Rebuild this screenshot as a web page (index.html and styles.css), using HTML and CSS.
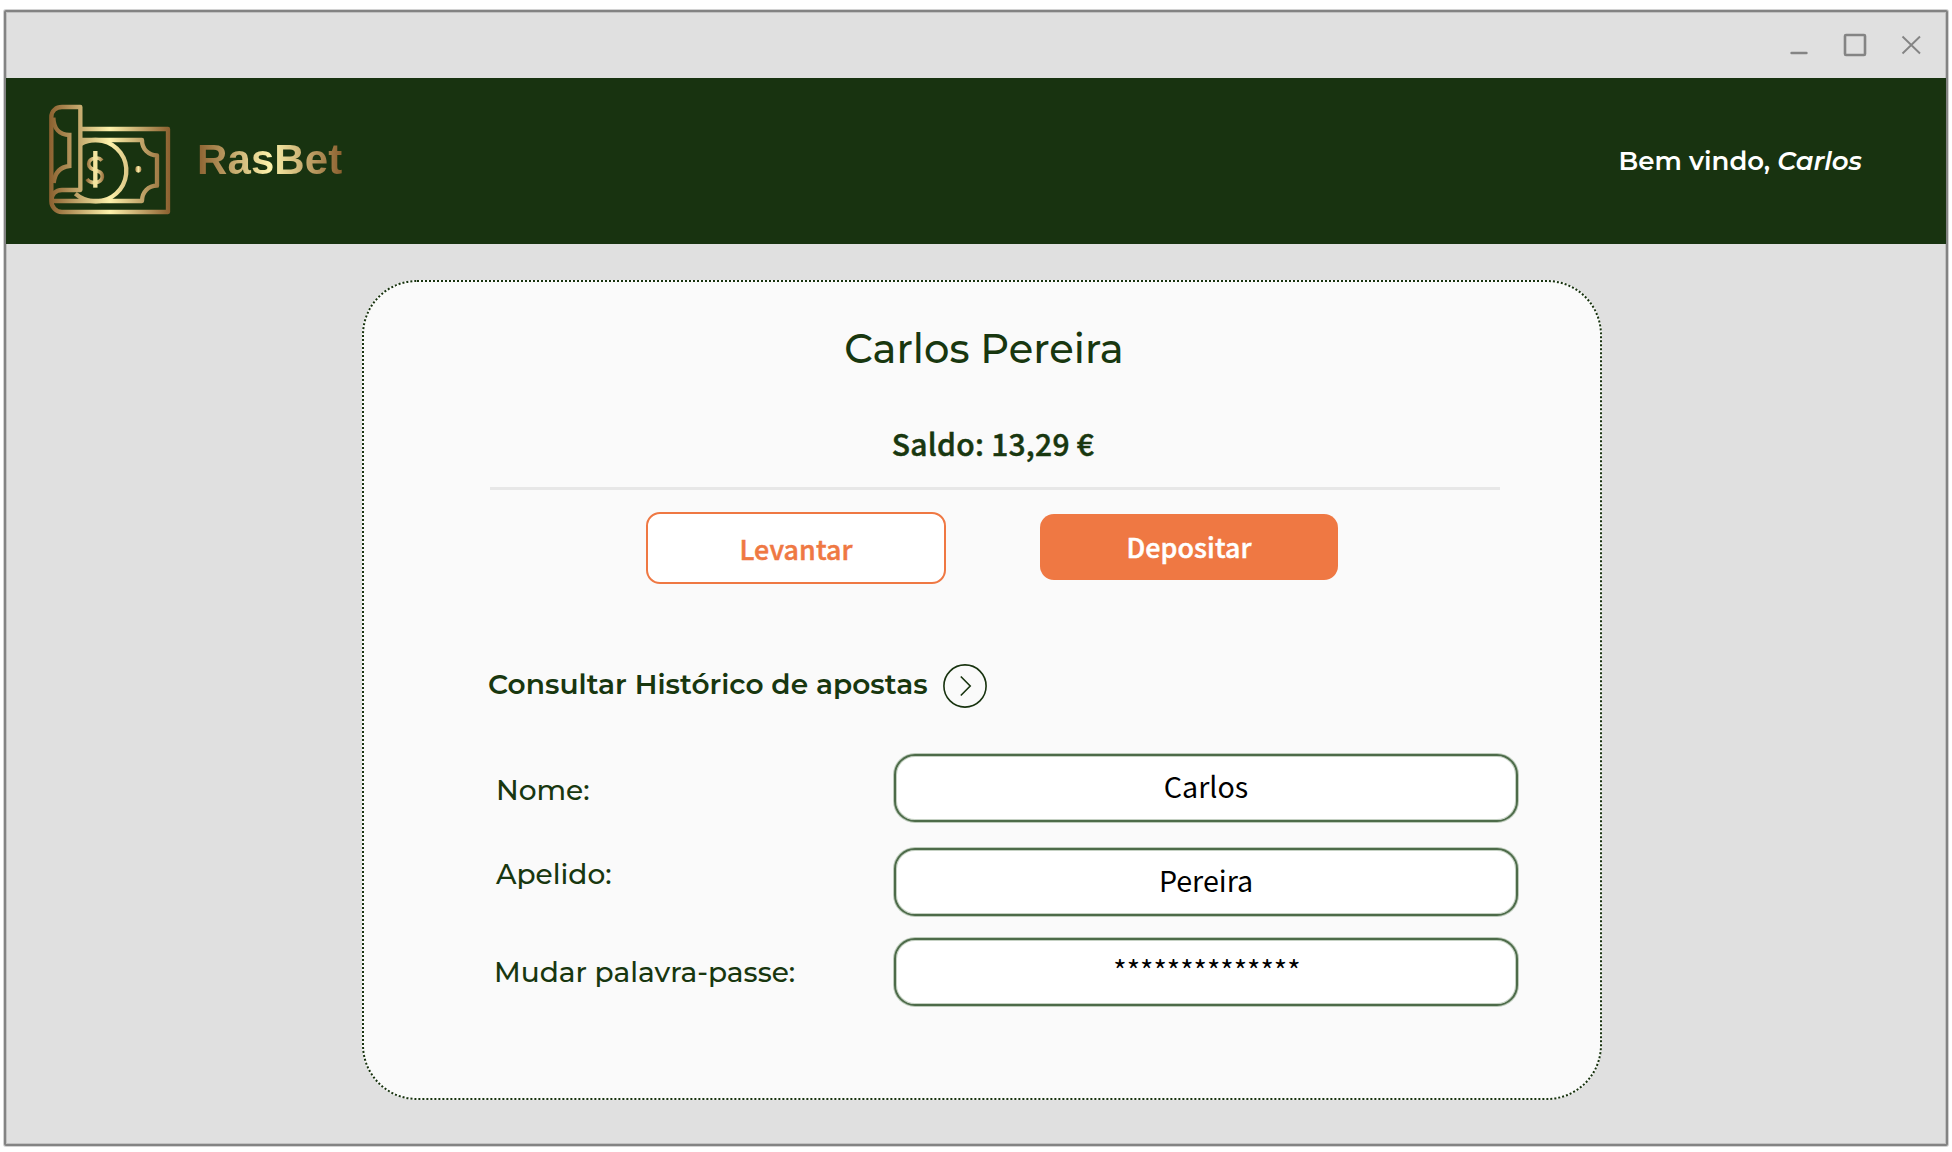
FILE: index.html
```html
<!DOCTYPE html>
<html lang="pt">
<head>
<meta charset="utf-8">
<title>RasBet</title>
<link rel="stylesheet" href="styles.css">
</head>
<body>
<div class="window">
  <div class="titlebar">
    <svg class="controls" width="132" height="26" viewBox="0 0 132 26" fill="none" stroke="#848484">
      <path d="M2.5 21H17.5" stroke-width="2.4" stroke-linecap="round"/>
      <rect x="56" y="3" width="20" height="20" rx="1" stroke-width="2.6"/>
      <path d="M113.5 4.5L131 21.5M131 4.5L113.5 21.5" stroke-width="1.9"/>
    </svg>
  </div>
  <header class="header">
    <div class="brand">
      <svg class="logo" width="140" height="130" viewBox="0 0 420 390" fill="none" stroke="url(#gold)" stroke-width="13">
        <defs>
          <linearGradient id="gold" gradientUnits="userSpaceOnUse" x1="28" y1="0" x2="390" y2="0">
            <stop offset="0" stop-color="#8b602f"/><stop offset=".5" stop-color="#fdf2ab"/><stop offset="1" stop-color="#8b602f"/>
          </linearGradient>
          <linearGradient id="gold-sign" gradientUnits="userSpaceOnUse" x1="138" y1="0" x2="194" y2="0">
            <stop offset="0" stop-color="#8b602f"/><stop offset=".5" stop-color="#fdf2ab"/><stop offset="1" stop-color="#8b602f"/>
          </linearGradient>
          <linearGradient id="gold-dot"><stop offset="0" stop-color="#a98148"/><stop offset=".5" stop-color="#fdf2ab"/><stop offset="1" stop-color="#a98148"/></linearGradient>
        </defs>
        <path d="M121 102H384V351H66C48 351 34 336 34 318V66C34 48 48 36 66 36H121V285H66C46 285 34 299 34 318H306C306 291 325 272 351 272V181C325 181 306 162 306 135H121" stroke-linejoin="round"/>
        <path d="M40 68C41 100 58 120 88 120V213C58 216 44 236 41 264"/>
        <path d="M122 147A92 92 0 1 1 106 296"/>
        <path d="M186 197C177 184 147 187 146 207C146 232 188 219 187 246C184 267 150 267 141 252" stroke="url(#gold-sign)" stroke-width="11"/>
        <path d="M166 168V278" stroke="#f3e59f"/>
        <ellipse cx="295" cy="223" rx="9" ry="10" fill="url(#gold-dot)" stroke="none"/>
      </svg>
      <span class="brand-name">RasBet</span>
    </div>
    <p class="welcome">Bem vindo, <em>Carlos</em></p>
  </header>
  <main class="card">
    <svg class="card-outline" width="1240" height="820"><rect x="1" y="1" width="1238" height="818" rx="54"/></svg>
    <h1 class="name">Carlos Pereira</h1>
    <p class="balance">Saldo: 13,29 €</p>
    <hr class="divider">
    <div class="actions">
      <button class="button outline"><span>Levantar</span></button>
      <button class="button solid"><span>Depositar</span></button>
    </div>
    <a class="history"><span class="history-text">Consultar Histórico de apostas</span>
      <svg width="44" height="44" viewBox="0 0 44 44" fill="none" stroke="#18330f" stroke-width="1.6"><circle cx="22" cy="22" r="21.1"/><path d="M17.8 12.5L27.2 22L17.8 31.5"/></svg>
    </a>
    <form class="fields">
      <div class="field"><label class="label nome">Nome:</label><div class="input">Carlos</div></div>
      <div class="field"><label class="label apelido">Apelido:</label><div class="input">Pereira</div></div>
      <div class="field"><label class="label senha">Mudar palavra-passe:</label><div class="input stars">**************</div></div>
    </form>
  </main>
</div>
</body>
</html>
```
FILE: styles.css
```css
* { box-sizing: border-box; }
body { margin: 0; padding: 10px 4px 6px; height: 1152px; background: #fff; overflow: hidden; color: #18370f; font-family: Montserrat, Inter, sans-serif; }
p, h1 { margin: 0; white-space: nowrap; }
.window { width: 1944px; height: 1136px; border: 2px solid #838383; border-radius: 2px; background: #e0e0e0; box-shadow: 0 0 0 1px #d2d2d2, inset 0 0 0 1px #c2c2c2; }
.titlebar { height: 66px; display: flex; justify-content: flex-end; padding: 20px 25px 0 0; }
.header { height: 166px; background: #183310; display: flex; justify-content: space-between; padding: 0 84px 0 34px; color: #fff; }
.brand { display: flex; align-items: flex-start; padding-top: 17px; }
.brand-name { margin: 41px 0 0 17px; font: bold 42px/48px "Liberation Sans", sans-serif; letter-spacing: 0.1px; color: transparent; background: linear-gradient(90deg, #8b602f, #fdf2ab 50%, #8b602f); -webkit-background-clip: text; background-clip: text; }
.welcome { font-size: 26px; font-weight: 600; line-height: 32px; margin-top: 67px; }
.card { position: relative; width: 1240px; height: 820px; margin: 36px 0 0 356px; border-radius: 55px; background: #fafafa; padding-top: 42px; }
.card-outline { position: absolute; left: 0; top: 0; fill: none; stroke: #18330f; stroke-width: 2; stroke-dasharray: 2 2; }
.name { font-size: 40px; font-weight: 500; line-height: 53px; letter-spacing: 0.05px; text-align: center; margin-left: 4px; }
.balance { margin: 48px 0 0 22px; text-align: center; font: 500 30px/40px "Noto Sans CJK SC", sans-serif; letter-spacing: 0.27px; -webkit-text-stroke: 0.5px; }
.divider { width: 1010px; height: 3px; margin: 24px 0 0 128px; border: 0; background: #e7e7e7; }
.actions { display: flex; align-items: flex-start; gap: 94px; padding: 22px 0 0 284px; height: 174px; }
.button { padding: 0; font: 500 26.8px/40px "Noto Sans CJK SC", sans-serif; letter-spacing: 0.12px; border-radius: 14px; -webkit-text-stroke: 0.5px; }
.outline { width: 300px; height: 72px; padding-top: 2px; border: 2px solid #ef7843; background: #fff; color: #ef7843; }
.solid { width: 298px; height: 66px; margin-top: 2px; border: 0; background: #ef7843; color: #fff; }
.history { display: flex; gap: 15px; padding-left: 126px; height: 90px; }
.history-text { width: 440px; font-size: 28px; font-weight: 600; line-height: 40px; letter-spacing: 0.05px; white-space: nowrap; }
.fields { display: flex; flex-direction: column; }
.field { display: flex; height: 94px; padding-left: 134px; }
.field:nth-child(2) { height: 90px; }
.label { width: 398px; font-size: 28px; font-weight: 500; line-height: 40px; white-space: nowrap; }
.nome { padding-top: 16px; }
.apelido { padding-top: 6px; }
.senha { padding-top: 14px; margin-left: -2px; width: 400px; }
.input { width: 624px; height: 68px; border: 2px solid #4d6b49; box-shadow: 0 0 0 1px #bdcbbb, inset 0 0 0 1px #c5d1c3; border-radius: 21px; background: #fff; color: #000; text-align: center; font: 400 28.65px/60px "Noto Sans CJK SC", sans-serif; }
.stars { padding-left: 2px; }
```
